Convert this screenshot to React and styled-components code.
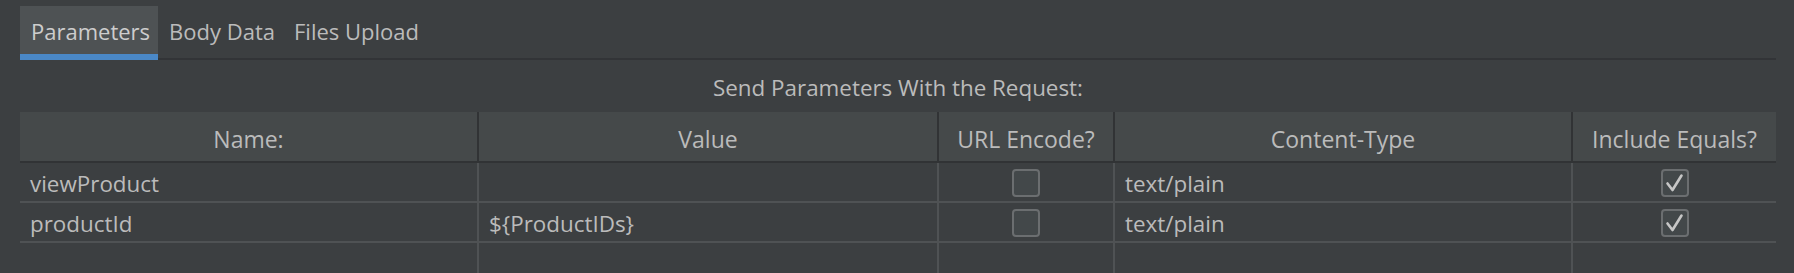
import React from 'react';
import styled, {createGlobalStyle} from 'styled-components';

const GlobalStyle = createGlobalStyle`
  html, body {
    margin: 0;
    padding: 0;
    height: 100%;
    overflow: hidden;
    background: #3c3f41;
  }
  body {
    font-family: "Open Sans", "Noto Sans", sans-serif;
    font-size: 22.4px;
    color: #bbbbbb;
  }
`;

const Panel = styled.div`
    padding: 6px 18px 0 20px;
`;

const TabBar = styled.div`
    display: flex;
    height: 52px;
    border-bottom: 2px solid #323437;
`;

const Tab = styled.div`
    display: flex;
    align-items: center;
    padding: 2px 8px 0 11px;
    margin-bottom: -2px;
    font-size: 22px;
    color: ${(props) => (props.active ? '#cdcdcd' : '#bbbbbb')};
    background: ${(props) => (props.active ? '#4e5254' : 'transparent')};
    border-bottom: 6px solid ${(props) => (props.active ? '#4a88c7' : 'transparent')};
    box-sizing: border-box;
    height: 54px;
`;

const Caption = styled.div`
    text-align: center;
    line-height: 30px;
    margin: 13px 0 9px;
`;

const Table = styled.div`
    display: grid;
    grid-template-columns: 459px 460px 176px 458px 1fr;
`;

const HeadCell = styled.div`
    display: flex;
    align-items: center;
    justify-content: center;
    height: 51px;
    box-sizing: border-box;
    padding-top: 5px;
    font-size: 23px;
    background: #45494a;
    border-bottom: 2px solid #313335;
    border-right: ${(props) => (props.last ? 'none' : '2px solid #313335')};
`;

const Cell = styled.div`
    display: flex;
    align-items: center;
    justify-content: ${(props) => (props.center ? 'center' : 'flex-start')};
    height: 40px;
    box-sizing: border-box;
    padding-top: 2px;
    padding-left: ${(props) => (props.center ? '0' : '10px')};
    border-bottom: 2px solid #4f5254;
    border-right: ${(props) => (props.last ? 'none' : '2px solid #4f5254')};
    white-space: nowrap;
`;

const Box = styled.div`
    width: 28px;
    height: 28px;
    box-sizing: border-box;
    border: 2px solid #6b6e70;
    border-radius: 4px;
    background: #43484a;
    display: flex;
    align-items: center;
    justify-content: center;
`;

const CheckBox = ({checked}) => (
    <Box>
        {checked && (
            <svg width="24" height="24" viewBox="0 0 24 24">
                <path
                    d="M4.5 12.5 L9.5 19 L18.5 4.5"
                    fill="none"
                    stroke="#c6c6c6"
                    strokeWidth="2.6"
                    strokeLinecap="round"
                    strokeLinejoin="round"
                />
            </svg>
        )}
    </Box>
);

const headers = ['Name:', 'Value', 'URL Encode?', 'Content-Type', 'Include Equals?'];

const rows = [
    {name: 'viewProduct', value: '', encode: false, type: 'text/plain', equals: true},
    {name: 'productId', value: '${ProductIDs}', encode: false, type: 'text/plain', equals: true},
];

const App = () => {
    return (
        <Panel>
            <GlobalStyle />
            <TabBar>
                <Tab active>Parameters</Tab>
                <Tab>Body Data</Tab>
                <Tab>Files Upload</Tab>
            </TabBar>
            <Caption>Send Parameters With the Request:</Caption>
            <Table>
                {headers.map((h, i) => (
                    <HeadCell key={h} last={i === headers.length - 1}>
                        {h}
                    </HeadCell>
                ))}
                {rows.map((r) => (
                    <React.Fragment key={r.name}>
                        <Cell>{r.name}</Cell>
                        <Cell>{r.value}</Cell>
                        <Cell center>
                            <CheckBox checked={r.encode} />
                        </Cell>
                        <Cell>{r.type}</Cell>
                        <Cell center last>
                            <CheckBox checked={r.equals} />
                        </Cell>
                    </React.Fragment>
                ))}
                <Cell />
                <Cell />
                <Cell />
                <Cell />
                <Cell last />
            </Table>
        </Panel>
    );
};

export default App;
